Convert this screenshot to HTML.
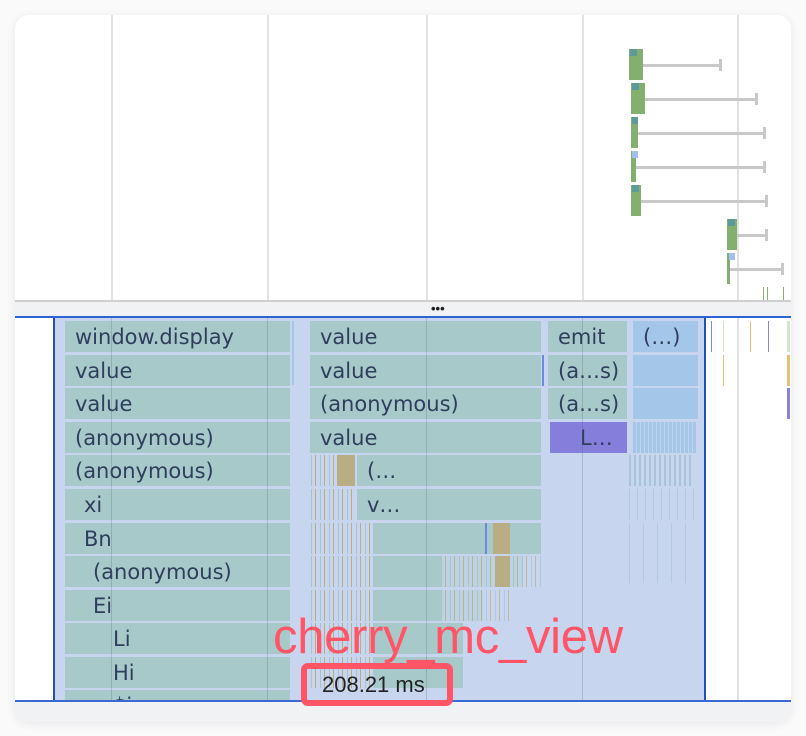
<!DOCTYPE html>
<html><head><meta charset="utf-8"><style>
*{margin:0;padding:0;box-sizing:border-box}
body{width:806px;height:736px;background:#fafafb;position:relative;overflow:hidden;font-family:"Liberation Sans","DejaVu Sans",sans-serif}
.card{position:absolute;left:15px;top:15px;width:776px;height:707px;background:#fff;border-radius:14px;box-shadow:0 2px 10px rgba(0,0,0,.08);overflow:hidden}
.a{position:absolute}
.g{position:absolute;top:0;width:2px;height:285px;background:#e2e2e2}
.b{position:absolute;height:31px;background:#a7c9c9;color:#2f3e5c;font-size:21px;line-height:32px;padding-left:10px;white-space:nowrap;overflow:hidden;font-family:"DejaVu Sans",sans-serif}
.bl{background:#a4c6e8}
.t{position:absolute;width:2px;height:31px}
.gr{position:absolute;background:#83b06e}
.wh{position:absolute;height:3px;background:#c8c8c8}
.wc{position:absolute;width:3px;height:12px;background:#c8c8c8}
.st{position:absolute;height:31px;background:repeating-linear-gradient(90deg,#a9c3c9 0 1px,#c8d5ee 1px 4px,#b9ad84 4px 5px,#c8d5ee 5px 9px)}
.fl{position:absolute;left:0;top:303px;width:776px;height:382px;overflow:hidden}
</style></head><body>
<div class="card">
 <div class="g" style="left:96px"></div><div class="g" style="left:252px"></div><div class="g" style="left:411px"></div><div class="g" style="left:567px"></div><div class="g" style="left:722px"></div>
 <div class="gr" style="left:614px;top:34px;width:14px;height:31px"></div><div class="a" style="left:615px;top:34px;width:7px;height:7px;background:#5f9a9a"></div><div class="wh" style="left:628px;top:49px;width:76px"></div><div class="wc" style="left:704px;top:44px"></div>
 <div class="gr" style="left:616px;top:68px;width:14px;height:31px"></div><div class="a" style="left:617px;top:68px;width:7px;height:7px;background:#5f9a9a"></div><div class="wh" style="left:630px;top:83px;width:110px"></div><div class="wc" style="left:740px;top:78px"></div>
 <div class="gr" style="left:616px;top:102px;width:7px;height:31px"></div><div class="a" style="left:617px;top:102px;width:6px;height:7px;background:#5f9a9a"></div><div class="wh" style="left:623px;top:117px;width:125px"></div><div class="wc" style="left:748px;top:112px"></div>
 <div class="gr" style="left:616px;top:136px;width:5px;height:31px"></div><div class="a" style="left:617px;top:136px;width:6px;height:7px;background:#a4c0f0"></div><div class="wh" style="left:621px;top:151px;width:127px"></div><div class="wc" style="left:748px;top:146px"></div>
 <div class="gr" style="left:616px;top:170px;width:10px;height:31px"></div><div class="a" style="left:617px;top:170px;width:7px;height:7px;background:#5f9a9a"></div><div class="wh" style="left:626px;top:185px;width:124px"></div><div class="wc" style="left:750px;top:180px"></div>
 <div class="gr" style="left:712px;top:204px;width:10px;height:31px"></div><div class="a" style="left:713px;top:204px;width:7px;height:7px;background:#5f9a9a"></div><div class="wh" style="left:722px;top:219px;width:28px"></div><div class="wc" style="left:750px;top:214px"></div>
 <div class="gr" style="left:712px;top:238px;width:3px;height:31px"></div><div class="a" style="left:714px;top:238px;width:6px;height:7px;background:#a4c0f0"></div><div class="wh" style="left:715px;top:253px;width:52px"></div><div class="wc" style="left:766px;top:248px"></div>
 <div class="a" style="left:748px;top:272px;width:1px;height:13px;background:#83b06e"></div><div class="a" style="left:752px;top:272px;width:1px;height:13px;background:#83b06e"></div><div class="a" style="left:768px;top:272px;width:1px;height:13px;background:#83b06e"></div>
 <div class="a" style="left:0;top:285px;width:776px;height:2px;background:#cfcfcf"></div>
 <div class="a" style="left:0;top:287px;width:776px;height:14px;background:#f1f2f4"></div>
 <div class="a" style="left:416px;top:291px;font-size:13px;line-height:6px;color:#222;font-weight:bold">•••</div>
 <div class="a" style="left:0;top:301px;width:776px;height:2px;background:#2e63d4"></div>
 <div class="a" style="left:38px;top:303px;width:653px;height:383px;background:#c8d5ee;border-left:2px solid #2151b8;border-right:2px solid #2151b8"></div>
 <div class="fl">
 <div class="b" style="left:50px;top:3px;width:225px">window.display</div>
 <div class="b" style="left:50px;top:37px;width:225px">value</div>
 <div class="b" style="left:50px;top:70px;width:225px">value</div>
 <div class="b" style="left:50px;top:104px;width:225px">(anonymous)</div>
 <div class="b" style="left:50px;top:137px;width:225px">(anonymous)</div>
 <div class="b" style="left:50px;top:171px;width:225px;padding-left:19px">xi</div>
 <div class="b" style="left:50px;top:205px;width:225px;padding-left:19px">Bn</div>
 <div class="b" style="left:50px;top:238px;width:225px;padding-left:28px">(anonymous)</div>
 <div class="b" style="left:50px;top:272px;width:225px;padding-left:28px">Ei</div>
 <div class="b" style="left:50px;top:305px;width:225px;padding-left:48px">Li</div>
 <div class="b" style="left:50px;top:339px;width:225px;padding-left:48px">Hi</div>
 <div class="b" style="left:50px;top:372px;width:225px;padding-left:48px">$i</div>
 <div class="t" style="left:277px;top:3px;background:#a4c6e8;height:64px"></div>
 <div class="b" style="left:295px;top:3px;width:231px">value</div>
 <div class="b" style="left:295px;top:37px;width:231px">value</div>
 <div class="b" style="left:295px;top:70px;width:231px">(anonymous)</div>
 <div class="b" style="left:295px;top:104px;width:231px">value</div>
 <div class="t" style="left:527px;top:37px;background:#6b8be0"></div>
 <div class="st" style="left:296px;top:137px;width:44px"></div>
 <div class="st" style="left:296px;top:171px;width:44px"></div>
 <div class="st" style="left:296px;top:205px;width:60px"></div>
 <div class="st" style="left:296px;top:238px;width:60px"></div>
 <div class="st" style="left:296px;top:272px;width:60px"></div>
 <div class="st" style="left:296px;top:305px;width:60px"></div>
 <div class="st" style="left:296px;top:339px;width:60px"></div>
 <div class="b" style="left:342px;top:137px;width:184px">(…</div>
 <div class="a" style="left:322px;top:137px;width:18px;height:31px;background:#b9ad84"></div>
 <div class="b" style="left:342px;top:171px;width:184px">v…</div>
 <div class="a" style="left:358px;top:205px;width:168px;height:31px;background:#a7c9c9"></div>
 <div class="a" style="left:358px;top:238px;width:150px;height:31px;background:#a7c9c9"></div>
 <div class="a" style="left:358px;top:272px;width:110px;height:31px;background:#a7c9c9"></div>
 <div class="a" style="left:358px;top:305px;width:90px;height:31px;background:#a7c9c9"></div>
 <div class="a" style="left:358px;top:339px;width:90px;height:31px;background:#a7c9c9"></div>
 <div class="st" style="left:426px;top:238px;width:100px;opacity:.7"></div>
 <div class="st" style="left:426px;top:272px;width:70px;opacity:.7"></div>
 <div class="a" style="left:478px;top:205px;width:17px;height:31px;background:#b9ad84"></div>
 <div class="a" style="left:480px;top:238px;width:15px;height:31px;background:#b9ad84"></div>
 <div class="t" style="left:470px;top:205px;background:#6b8be0"></div>
 <div class="b" style="left:533px;top:3px;width:79px">emit</div>
 <div class="b" style="left:533px;top:37px;width:79px">(a…s)</div>
 <div class="b" style="left:533px;top:70px;width:79px">(a…s)</div>
 <div class="b" style="left:535px;top:104px;width:77px;background:#837fdb;padding-left:30px">L…</div>
 <div class="b bl" style="left:618px;top:3px;width:65px">(…)</div>
 <div class="a" style="left:618px;top:37px;width:65px;height:31px;background:#a4c6e8"></div>
 <div class="a" style="left:618px;top:70px;width:65px;height:31px;background:#a4c6e8"></div>
 <div class="a" style="left:618px;top:104px;width:63px;height:31px;background:repeating-linear-gradient(90deg,#a4c6e8 0 3px,#c0d3ec 3px 4px)"></div>
 <div class="a" style="left:614px;top:137px;width:65px;height:31px;background:repeating-linear-gradient(90deg,#a9c3d9 0 2px,#c8d5ee 2px 5px)"></div>
 <div class="a" style="left:614px;top:171px;width:65px;height:31px;background:repeating-linear-gradient(90deg,#b6c8de 0 1px,#c8d5ee 1px 8px)"></div>
 <div class="a" style="left:614px;top:205px;width:65px;height:60px;background:repeating-linear-gradient(90deg,#b6c8de 0 1px,#c8d5ee 1px 14px)"></div>
 <div class="t" style="left:696px;top:3px;width:1px;background:#8a80e0"></div>
 <div class="t" style="left:708px;top:3px;width:1px;background:#cfe6c8"></div>
 <div class="t" style="left:708px;top:37px;width:1px;background:#e8c070"></div>
 <div class="a" style="left:722px;top:0;width:2px;height:383px;background:#e2e2e2"></div>
 <div class="t" style="left:735px;top:3px;width:1px;background:#e8c070"></div>
 <div class="t" style="left:753px;top:3px;width:1px;background:#8a80e0"></div>
 <div class="t" style="left:772px;top:3px;width:3px;background:#cfe6c8"></div>
 <div class="t" style="left:772px;top:37px;width:3px;background:#e8c070"></div>
 <div class="t" style="left:772px;top:70px;width:3px;background:#8a80e0"></div>
 <div class="a" style="left:96px;top:0;width:1px;height:383px;background:rgba(80,100,110,.25)"></div>
 <div class="a" style="left:252px;top:0;width:1px;height:383px;background:rgba(80,100,110,.25)"></div>
 <div class="a" style="left:411px;top:0;width:1px;height:383px;background:rgba(80,100,110,.25)"></div>
 <div class="a" style="left:567px;top:0;width:1px;height:383px;background:rgba(80,100,110,.25)"></div>
 </div>
 <div class="a" style="left:0;top:685px;width:776px;height:2px;background:#3a6ad4"></div>
 <div class="a" style="left:0;top:687px;width:776px;height:20px;background:#f1f2f4"></div>
 <div class="a" style="left:258px;top:595px;font-size:49px;line-height:54px;color:#ff5566;letter-spacing:-0.3px">cherry_mc_view</div>
 <div class="a" style="left:286px;top:648px;width:152px;height:43px;border:6px solid #ff5566;border-radius:7px;font-size:22px;line-height:32px;color:#222;padding-left:15px;white-space:nowrap">208.21 ms</div>
</div>
</body></html>
